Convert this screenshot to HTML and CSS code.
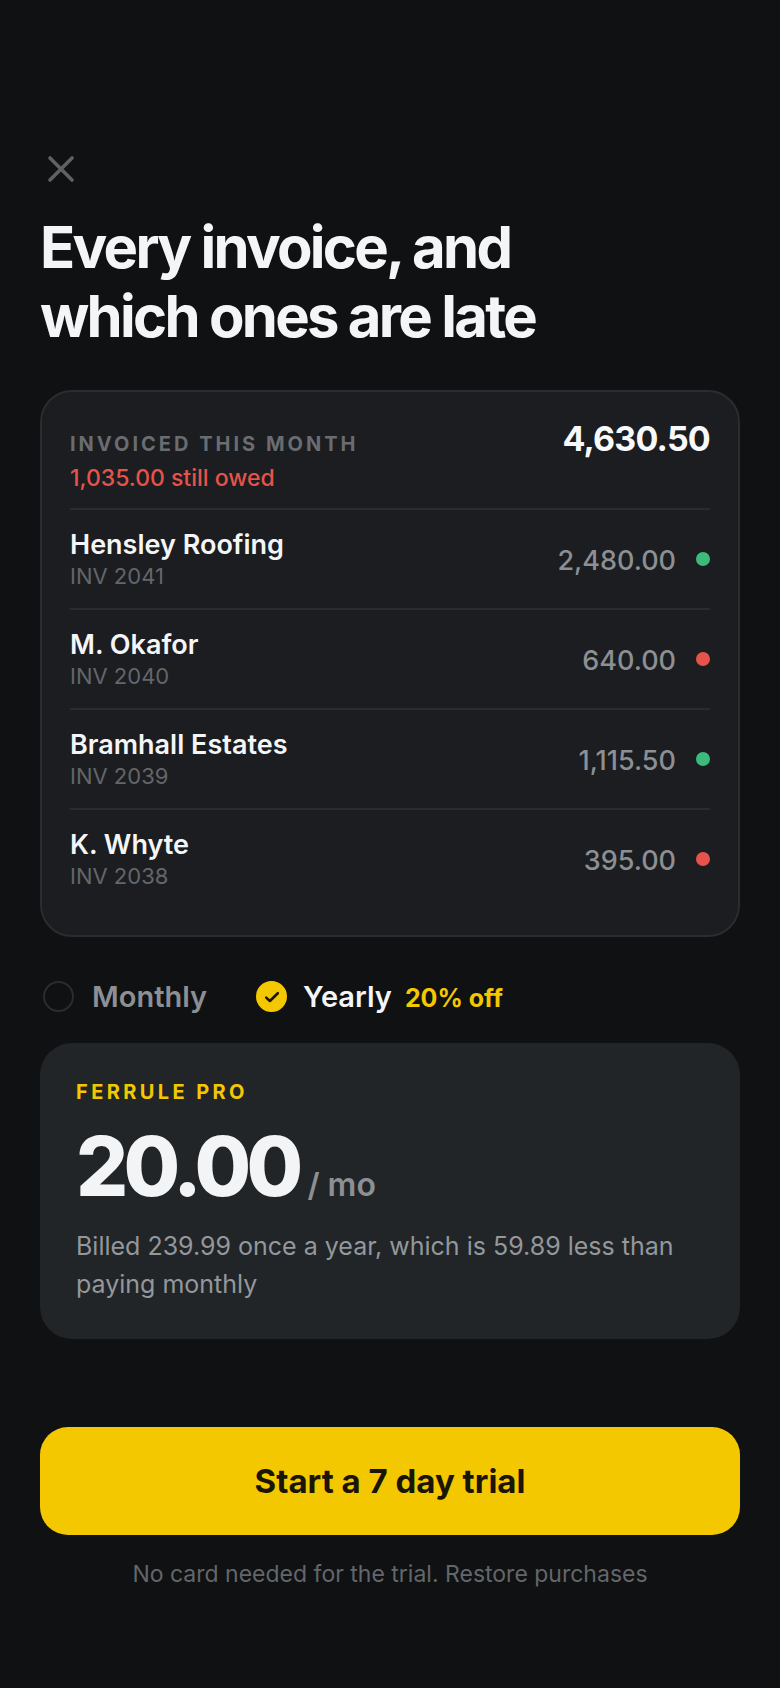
FILE: index.html
```html
<!DOCTYPE html>
<html lang="en">
<head>
  <meta charset="UTF-8">
  <meta name="viewport" content="width=device-width, initial-scale=1.0">
  <title>Ferrule Pro</title>
  <link rel="stylesheet" href="styles.css">
</head>
<body>

  <main class="screen">
    <button class="close" aria-label="Close">
      <svg width="32" height="32" viewBox="0 0 32 32" fill="none" stroke="#5f6265" stroke-width="3.6" stroke-linecap="round">
        <path d="M5 5 L27 27 M27 5 L5 27"/>
      </svg>
    </button>

    <h1>Every invoice, and<br>which ones are late</h1>

    <section class="ledger">
      <div class="ledger-head">
        <div>
          <div class="ledger-label">INVOICED THIS MONTH</div>
          <div class="ledger-owed">1,035.00 still owed</div>
        </div>
        <div class="ledger-total">4,630.50</div>
      </div>

      <div class="row">
        <div class="row-who">
          <div class="row-name">Hensley Roofing</div>
          <div class="row-inv">INV 2041</div>
        </div>
        <div class="row-amount">2,480.00</div>
        <span class="dot paid"></span>
      </div>
      <div class="row">
        <div class="row-who">
          <div class="row-name">M. Okafor</div>
          <div class="row-inv">INV 2040</div>
        </div>
        <div class="row-amount">640.00</div>
        <span class="dot late"></span>
      </div>
      <div class="row">
        <div class="row-who">
          <div class="row-name">Bramhall Estates</div>
          <div class="row-inv">INV 2039</div>
        </div>
        <div class="row-amount">1,115.50</div>
        <span class="dot paid"></span>
      </div>
      <div class="row">
        <div class="row-who">
          <div class="row-name">K. Whyte</div>
          <div class="row-inv">INV 2038</div>
        </div>
        <div class="row-amount">395.00</div>
        <span class="dot late"></span>
      </div>
    </section>

    <div class="plans">
      <div class="plan">
        <span class="radio"></span>
        <span class="plan-name">Monthly</span>
      </div>
      <div class="plan active">
        <span class="radio checked">
          <svg width="18" height="18" viewBox="0 0 18 18" fill="none" stroke="#1a1505" stroke-width="2.6" stroke-linecap="round" stroke-linejoin="round">
            <path d="M3.2 10.6 L6.9 14 L14.8 6.2"/>
          </svg>
        </span>
        <span class="plan-name">Yearly</span>
        <span class="plan-off">20% off</span>
      </div>
    </div>

    <section class="price-card">
      <div class="price-label">FERRULE PRO</div>
      <div class="price-line">
        <span class="price">20.00</span>
        <span class="price-unit">/ mo</span>
      </div>
      <p class="price-note">Billed 239.99 once a year, which is 59.89 less than paying monthly</p>
    </section>

    <button class="cta">Start a 7 day trial</button>
    <p class="foot">No card needed for the trial. Restore purchases</p>
  </main>

</body>
</html>
```

FILE: styles.css
```css
* {
  box-sizing: border-box;
}

body {
  margin: 0;
  background-color: #0f1113;
  color: #f4f5f7;
  font-family: "Inter", "Liberation Sans", sans-serif;
}

.screen {
  width: 780px;
  height: 1688px;
  padding: 153px 40px 0;
}

.close {
  display: block;
  width: 32px;
  height: 32px;
  margin-left: 5px;
  padding: 0;
  background: none;
  border: none;
}

.close svg {
  display: block;
}

h1 {
  margin: 28px 0 0;
  font-size: 58px;
  line-height: 69px;
  font-weight: 700;
  letter-spacing: -2.7px;
}

.ledger {
  margin-top: 39px;
  height: 547px;
  padding: 26px 28px 0;
  background-color: #1b1d20;
  border: 2px solid #2a2d30;
  border-radius: 32px;
}

.ledger-head {
  display: flex;
  justify-content: space-between;
  align-items: flex-start;
  height: 90px;
}

.ledger-label {
  margin-top: 14px;
  font-size: 20px;
  line-height: 24px;
  font-weight: 700;
  letter-spacing: 3px;
  color: #696c70;
}

.ledger-owed {
  margin-top: 8px;
  font-size: 23px;
  line-height: 28px;
  font-weight: 500;
  color: #e5534b;
}

.ledger-total {
  font-size: 34px;
  line-height: 42px;
  font-weight: 700;
  letter-spacing: -0.8px;
  color: #f8f9fa;
}

.row {
  display: flex;
  align-items: center;
  height: 100px;
  border-top: 2px solid #2a2d30;
}

.row-who {
  flex: 1;
}

.row-name {
  font-size: 27px;
  line-height: 34px;
  font-weight: 600;
  color: #f4f5f7;
}

.row-inv {
  font-size: 22px;
  line-height: 28px;
  color: #63666a;
}

.row-amount {
  padding-top: 3px;
  font-size: 27px;
  line-height: 34px;
  font-weight: 500;
  color: #8c8f93;
}

.dot {
  width: 14px;
  height: 14px;
  margin-left: 20px;
  border-radius: 50%;
}

.dot.paid {
  background-color: #3dbb7d;
}

.dot.late {
  background-color: #e5534b;
}

.plans {
  display: flex;
  align-items: center;
  gap: 49px;
  height: 106px;
  padding: 12px 0 0 3px;
}

.plan {
  display: flex;
  align-items: center;
  font-size: 29px;
  font-weight: 600;
  color: #8c8f93;
}

.plan.active {
  color: #f4f5f7;
}

.radio {
  display: flex;
  align-items: center;
  justify-content: center;
  width: 31px;
  height: 31px;
  margin-right: 18px;
  border: 2px solid #2a2d30;
  border-radius: 50%;
}

.radio.checked {
  margin-right: 16px;
  background-color: #f4c800;
  border-color: #f4c800;
}

.plan-off {
  margin: 3px 0 0 13px;
  font-size: 25px;
  font-weight: 700;
  color: #f4c800;
}

.price-card {
  height: 296px;
  padding: 37px 36px 0;
  background-color: #212528;
  border-radius: 32px;
}

.price-label {
  font-size: 20px;
  line-height: 24px;
  font-weight: 700;
  letter-spacing: 3.4px;
  color: #f4c800;
}

.price-line {
  display: flex;
  align-items: baseline;
  gap: 9px;
  margin-top: 15px;
}

.price {
  font-size: 82px;
  line-height: 96px;
  font-weight: 800;
  letter-spacing: -4.8px;
  color: #f2f4f6;
}

.price-unit {
  font-size: 32px;
  font-weight: 600;
  color: #8c8f93;
}

.price-note {
  margin: 12px 0 0;
  font-size: 25px;
  line-height: 38px;
  color: #94979b;
}

.cta {
  display: block;
  width: 100%;
  height: 108px;
  margin-top: 88px;
  background-color: #f4c800;
  border: none;
  border-radius: 28px;
  font-family: inherit;
  font-size: 33px;
  font-weight: 700;
  color: #1a1505;
}

.foot {
  margin: 24px 0 0;
  text-align: center;
  font-size: 23px;
  line-height: 30px;
  color: #63666a;
}
```
